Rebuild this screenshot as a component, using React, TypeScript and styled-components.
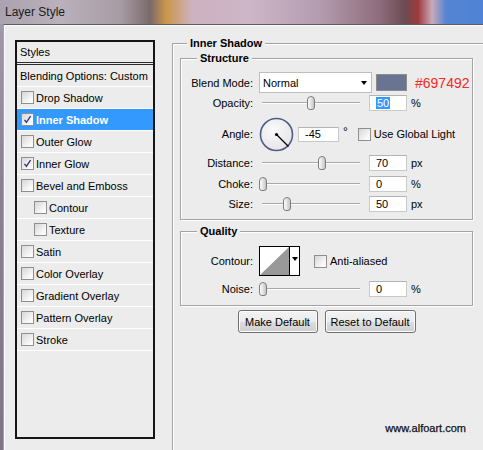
import React from 'react';
import styled, { createGlobalStyle } from 'styled-components';

const GlobalStyle = createGlobalStyle`
  html, body {
    margin: 0;
    padding: 0;
  }
  body {
    font-family: "Liberation Sans", Arial, sans-serif;
    font-size: 11px;
    color: #000;
  }
`;

const Screen = styled.div`
  width: 483px;
  height: 450px;
  overflow: hidden;
  display: flex;
  flex-direction: column;
  background: linear-gradient(to bottom, #a59cab, #8a8192 40%, #7d7486);
`;

const TitleBar = styled.div`
  height: 24px;
  flex: none;
  display: flex;
  align-items: center;
  padding-left: 5px;
  font-size: 12px;
  color: #1b1b1b;
  background: linear-gradient(
    to right,
    #aaa2ae 0px,
    #bab1bd 60px,
    #a89ca4 120px,
    #7a6a6a 150px,
    #c9964a 166px,
    #cdb2c0 192px,
    #cdb6c8 250px,
    #b49cb0 320px,
    #8d6c7c 380px,
    #6c4b52 405px,
    #9e3a3c 418px,
    #c8aab8 432px,
    #5584d2 446px,
    #4f82d6 483px
  );
`;

const Dialog = styled.div`
  flex: 1;
  margin-left: 3px;
  display: flex;
  align-items: flex-start;
  padding: 15px 0 0 11px;
  background: #ececec;
  border-top: 1px solid #5d5d5d;
  border-left: 1px solid #a3a3a3;
  box-shadow: inset 1px 1px 0 #fbfbfb;
  min-height: 0;
`;

/* ---------- left styles list ---------- */

const StylesPanel = styled.div`
  flex: none;
  width: 140px;
  height: 399px;
  box-sizing: border-box;
  border: 2px solid #151515;
  background: #ececec;
`;

const PanelHeader = styled.div`
  height: 20px;
  line-height: 20px;
  padding-left: 3px;
  border-bottom: 3px double #2b2b2b;
`;

const StyleRow = styled.div<{ $active?: boolean; $indent?: boolean; $plain?: boolean }>`
  height: 21px;
  display: flex;
  align-items: center;
  gap: 2px;
  padding-left: ${({ $indent, $plain }) => ($plain ? 3 : $indent ? 17 : 4)}px;
  border-bottom: 1px solid #fff;
  background: ${({ $active }) => ($active ? '#3399ff' : 'transparent')};
  color: ${({ $active }) => ($active ? '#fff' : '#000')};
  font-weight: ${({ $active }) => ($active ? 'bold' : 'normal')};
  white-space: nowrap;
`;

const Box = styled.span`
  flex: none;
  width: 13px;
  height: 13px;
  box-sizing: border-box;
  border: 1px solid #8f8f8f;
  background: linear-gradient(135deg, #d6d6d6, #f7f7f7 70%, #fff);
  display: flex;
  align-items: center;
  justify-content: center;
`;

const Check = ({ checked }: { checked?: boolean }) => (
  <Box>
    {checked && (
      <svg width="9" height="9" viewBox="0 0 9 9">
        <path d="M1.5 4.8 L3.4 7.4 L7.6 1.2" fill="none" stroke="#2c3b7c" strokeWidth="1.4" />
      </svg>
    )}
  </Box>
);

/* ---------- right side ---------- */

const RightColumn = styled.div`
  margin-left: 17px;
  margin-top: -3px;
  flex: none;
`;

const Group = styled.fieldset<{ $w: number; $h?: number; $mt?: number; $ml?: number }>`
  margin: ${({ $mt = 0 }) => $mt}px 0 0 ${({ $ml = 0 }) => $ml}px;
  padding: 0;
  width: ${({ $w }) => $w}px;
  ${({ $h }) => ($h ? `height: ${$h}px;` : '')}
  box-sizing: border-box;
  min-width: 0;
  border: 1px solid #a3a3a3;
  box-shadow: inset 1px 1px 0 #fff, 1px 1px 0 #fff;
`;

const Legend = styled.legend<{ $x: number }>`
  margin-left: ${({ $x }) => $x}px;
  padding: 0 3px;
  font-weight: bold;
  font-size: 11px;
  line-height: 13px;
  background: #ececec;
`;

const GroupBody = styled.div<{ $pb: number }>`
  padding-bottom: ${({ $pb }) => $pb}px;
`;

const Row = styled.div<{ $h: number; $mt: number }>`
  display: flex;
  align-items: center;
  height: ${({ $h }) => $h}px;
  margin-top: ${({ $mt }) => $mt}px;
  white-space: nowrap;
`;

const Label = styled.span`
  flex: none;
  width: 72px;
  margin-right: 6px;
  text-align: right;
`;

const Select = styled.div`
  width: 113px;
  height: 21px;
  box-sizing: border-box;
  border: 1px solid #bdbdbd;
  background: #fff;
  display: flex;
  align-items: center;
  justify-content: space-between;
  padding: 0 4px 0 3px;
`;

const Arrow = styled.span`
  width: 0;
  height: 0;
  border-left: 3.5px solid transparent;
  border-right: 3.5px solid transparent;
  border-top: 4px solid #000;
`;

const Swatch = styled.span`
  width: 31px;
  height: 17px;
  box-sizing: border-box;
  margin-left: 4px;
  background: #697492;
  border: 1px solid #8c8c8c;
`;

const HexNote = styled.span`
  margin-left: 8px;
  font-size: 14px;
  color: #f42a23;
`;

const SliderWrap = styled.div`
  position: relative;
  width: 106px;
  height: 16px;
  flex: none;
`;

const Track = styled.div`
  position: absolute;
  left: 3px;
  right: 5px;
  top: 7px;
  height: 1px;
  background: #a9a9a9;
  border-bottom: 1px solid #fdfdfd;
`;

const Thumb = styled.div<{ $at: number }>`
  position: absolute;
  top: 1px;
  left: ${({ $at }) => $at}px;
  width: 8px;
  height: 14px;
  box-sizing: border-box;
  border: 1px solid #7d7d7d;
  border-radius: 4px 4px 3px 3px;
  background: linear-gradient(to right, #fdfdfd, #dcdcdc 60%, #c4c4c4);
`;

const Slider = ({ at }: { at: number }) => (
  <SliderWrap>
    <Track />
    <Thumb $at={at} />
  </SliderWrap>
);

const Field = styled.div<{ $w: number; $h?: number; $ml: number }>`
  flex: none;
  width: ${({ $w }) => $w}px;
  height: ${({ $h = 16 }) => $h}px;
  margin-left: ${({ $ml }) => $ml}px;
  box-sizing: border-box;
  background: #fff;
  border: 1px solid #c9c9c9;
  border-top-color: #b3b3b3;
  display: flex;
  align-items: center;
  padding-left: 6px;
`;

const Selected = styled.span`
  background: #3399ff;
  color: #fff;
  padding: 0 1px;
  line-height: 12px;
`;

const Unit = styled.span<{ $ml?: number }>`
  margin-left: ${({ $ml = 4 }) => $ml}px;
`;

const Degree = styled.span`
  margin-left: 4px;
  align-self: flex-start;
  margin-top: 8px;
  font-size: 12px;
`;

const CheckLabel = styled.label<{ $ml: number }>`
  display: flex;
  align-items: center;
  gap: 3px;
  margin-left: ${({ $ml }) => $ml}px;
`;

const Dial = () => (
  <svg width="35" height="35" viewBox="0 0 35 35" style={{ flex: 'none' }}>
    <defs>
      <radialGradient id="dialFill" cx="0.4" cy="0.35" r="0.7">
        <stop offset="0" stopColor="#fafafa" />
        <stop offset="1" stopColor="#e4e4ea" />
      </radialGradient>
    </defs>
    <circle cx="17.5" cy="17.5" r="16" fill="url(#dialFill)" stroke="#4e5d88" strokeWidth="1.6" />
    <line x1="17.5" y1="17.5" x2="29.5" y2="29.5" stroke="#000" strokeWidth="1.2" />
    <circle cx="17.5" cy="17.5" r="1.6" fill="#000" />
  </svg>
);

const ContourBox = styled.div`
  width: 41px;
  height: 30px;
  box-sizing: border-box;
  border: 1px solid #000;
  display: flex;
  background: #fff;
`;

const ContourArrow = styled.div`
  flex: 1;
  border-left: 1px solid #000;
  display: flex;
  justify-content: center;
  padding-top: 10px;
`;

const ButtonRow = styled.div`
  width: 293px;
  margin: 4px 0 0 7px;
  display: flex;
  justify-content: center;
  gap: 7px;
`;

const Button = styled.button<{ $w: number }>`
  width: ${({ $w }) => $w}px;
  height: 23px;
  padding: 0;
  font-family: "Liberation Sans", Arial, sans-serif;
  font-size: 11px;
  color: #000;
  border: 1px solid #707070;
  border-radius: 3px;
  background: linear-gradient(to bottom, #f3f3f3 0%, #ebebeb 50%, #dddddd 51%, #cfcfcf 100%);
  box-shadow: inset 0 0 0 1px #fcfcfc;
`;

const Watermark = styled.div`
  width: 293px;
  margin: 89px 0 0 7px;
  padding-right: 7px;
  box-sizing: border-box;
  text-align: right;
  font-size: 11px;
  line-height: 13px;
  color: #111;
  -webkit-text-stroke: 0.25px #111;
`;

const styleItems: { name: string; checked?: boolean; active?: boolean; indent?: boolean }[] = [
  { name: 'Drop Shadow' },
  { name: 'Inner Shadow', checked: true, active: true },
  { name: 'Outer Glow' },
  { name: 'Inner Glow', checked: true },
  { name: 'Bevel and Emboss' },
  { name: 'Contour', indent: true },
  { name: 'Texture', indent: true },
  { name: 'Satin' },
  { name: 'Color Overlay' },
  { name: 'Gradient Overlay' },
  { name: 'Pattern Overlay' },
  { name: 'Stroke' },
];

export default function App() {
  return (
    <Screen>
      <GlobalStyle />
      <TitleBar>Layer Style</TitleBar>
      <Dialog>
        <StylesPanel>
          <PanelHeader>Styles</PanelHeader>
          <StyleRow $plain>Blending Options: Custom</StyleRow>
          {styleItems.map((item) => (
            <StyleRow key={item.name} $active={item.active} $indent={item.indent}>
              <Check checked={item.checked} />
              {item.name}
            </StyleRow>
          ))}
        </StylesPanel>

        <RightColumn>
          <Group $w={320} $h={430}>
            <Legend $x={14}>Inner Shadow</Legend>

            <Group $w={293} $mt={2} $ml={7}>
              <Legend $x={16}>Structure</Legend>
              <GroupBody $pb={7}>
                <Row $h={21} $mt={7}>
                  <Label>Blend Mode:</Label>
                  <Select>
                    Normal
                    <Arrow />
                  </Select>
                  <Swatch />
                  <HexNote>#697492</HexNote>
                </Row>
                <Row $h={16} $mt={2}>
                  <Label>Opacity:</Label>
                  <Slider at={48} />
                  <Field $w={38} $ml={4}>
                    <Selected>50</Selected>
                  </Field>
                  <Unit>%</Unit>
                </Row>
                <Row $h={34} $mt={6}>
                  <Label>Angle:</Label>
                  <Dial />
                  <Field $w={41} $h={15} $ml={4}>
                    -45
                  </Field>
                  <Degree>°</Degree>
                  <CheckLabel $ml={10}>
                    <Check />
                    Use Global Light
                  </CheckLabel>
                </Row>
                <Row $h={16} $mt={4}>
                  <Label>Distance:</Label>
                  <Slider at={59} />
                  <Field $w={38} $ml={4}>
                    70
                  </Field>
                  <Unit>px</Unit>
                </Row>
                <Row $h={16} $mt={5}>
                  <Label>Choke:</Label>
                  <Slider at={0} />
                  <Field $w={38} $ml={4}>
                    0
                  </Field>
                  <Unit>%</Unit>
                </Row>
                <Row $h={16} $mt={4}>
                  <Label>Size:</Label>
                  <Slider at={24} />
                  <Field $w={38} $ml={4}>
                    50
                  </Field>
                  <Unit>px</Unit>
                </Row>
              </GroupBody>
            </Group>

            <Group $w={293} $mt={5} $ml={7}>
              <Legend $x={16}>Quality</Legend>
              <GroupBody $pb={8}>
                <Row $h={30} $mt={8}>
                  <Label>Contour:</Label>
                  <ContourBox>
                    <svg width="29" height="28" viewBox="0 0 29 28">
                      <polygon points="0,28 29,0 29,28" fill="#999" />
                    </svg>
                    <ContourArrow>
                      <Arrow />
                    </ContourArrow>
                  </ContourBox>
                  <CheckLabel $ml={14}>
                    <Check />
                    Anti-aliased
                  </CheckLabel>
                </Row>
                <Row $h={16} $mt={5}>
                  <Label>Noise:</Label>
                  <Slider at={0} />
                  <Field $w={38} $ml={4}>
                    0
                  </Field>
                  <Unit>%</Unit>
                </Row>
              </GroupBody>
            </Group>

            <ButtonRow>
              <Button $w={80}>Make Default</Button>
              <Button $w={91}>Reset to Default</Button>
            </ButtonRow>

            <Watermark>www.alfoart.com</Watermark>
          </Group>
        </RightColumn>
      </Dialog>
    </Screen>
  );
}
